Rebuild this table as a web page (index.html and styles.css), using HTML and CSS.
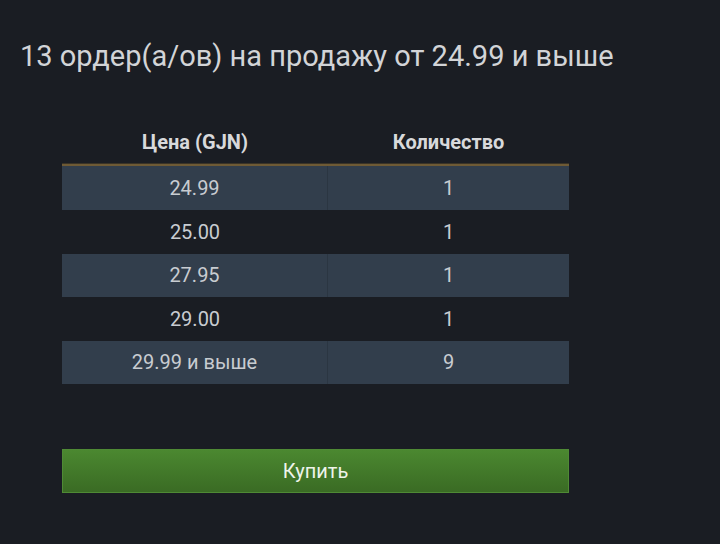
FILE: index.html
```html
<!DOCTYPE html>
<html lang="ru">
<head>
  <meta charset="UTF-8">
  <meta name="viewport" content="width=device-width, initial-scale=1.0">
  <title>Ордеры на продажу</title>
  <link rel="stylesheet" href="styles.css">
</head>
<body>

  <h2 class="title">13 ордер(а/ов) на продажу от 24.99 и выше</h2>

  <div class="orders">
    <div class="row head">
      <div class="cell">Цена (GJN)</div>
      <div class="cell">Количество</div>
    </div>
    <div class="rows">
      <div class="row alt">
        <div class="cell">24.99</div>
        <div class="cell">1</div>
      </div>
      <div class="row">
        <div class="cell">25.00</div>
        <div class="cell">1</div>
      </div>
      <div class="row alt">
        <div class="cell">27.95</div>
        <div class="cell">1</div>
      </div>
      <div class="row">
        <div class="cell">29.00</div>
        <div class="cell">1</div>
      </div>
      <div class="row alt">
        <div class="cell">29.99 и выше</div>
        <div class="cell">9</div>
      </div>
    </div>
  </div>

  <button class="buy">Купить</button>

</body>
</html>
```

FILE: styles.css
```css
body {
  margin: 0;
  padding: 40px 0 0 20px;
  background: #1a1d23;
  font-family: Roboto, "Noto Sans", sans-serif;
  color: #c8ccd1;
}

.title {
  margin: 0;
  font-size: 29px;
  line-height: 32px;
  font-weight: 400;
  color: #d2d4d7;
}

.orders {
  width: 507px;
  margin: 48px 0 0 42px;
}

.row {
  display: grid;
  grid-template-columns: 266px 1fr;
  height: 44px;
}

.row + .row {
  height: 43.5px;
}

.cell {
  display: flex;
  align-items: center;
  justify-content: center;
  font-size: 20px;
}

.head .cell {
  font-size: 20px;
  font-weight: 700;
  color: #d8d9db;
}

.rows {
  border-top: 2px solid #6e5a35;
  box-shadow: 0 -1px 0 #3a3326;
}

.row.alt {
  background: #323e4c;
}

.row.alt .cell:first-child {
  border-right: 1px solid #2b3642;
}

.buy {
  display: block;
  width: 507px;
  height: 44px;
  margin: 65px 0 0 42px;
  padding: 0;
  border: 1px solid #4f8a35;
  background: linear-gradient(to bottom, #4b8830, #3a6b24);
  color: #eef4ea;
  font-family: Roboto, "Noto Sans", sans-serif;
  font-size: 20px;
  cursor: pointer;
}
```
